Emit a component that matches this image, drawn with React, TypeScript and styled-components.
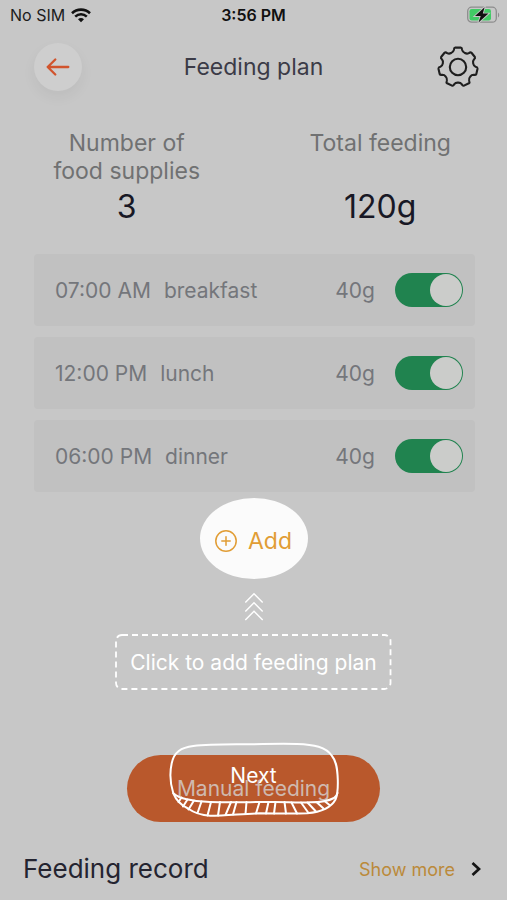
import React, { useState } from "react";
import styled, { createGlobalStyle } from "styled-components";

const GlobalStyle = createGlobalStyle`
  *, *::before, *::after { box-sizing: border-box; }
  body {
    margin: 0;
    background: #c7c7c7;
    color: #1b1b27;
    font-family: Inter, "Liberation Sans", sans-serif;
  }
  button { font-family: inherit; border: 0; padding: 0; cursor: pointer; }
`;

const Screen = styled.div`
  min-height: 100vh;
  display: flex;
  flex-direction: column;
`;

const StatusBar = styled.div`
  display: grid;
  grid-template-columns: 1fr auto 1fr;
  align-items: center;
  height: 30px;
  padding: 0 7px;
  font-size: 16px;
  color: #1c1c1c;
`;

const Carrier = styled.div`
  display: flex;
  align-items: center;
  gap: 6px;
  padding-left: 3px;
`;

const Clock = styled.time`
  font-weight: 600;
  color: #111;
`;

const BatterySlot = styled.div`
  display: flex;
  justify-content: flex-end;
`;

const Header = styled.header`
  display: grid;
  grid-template-columns: 1fr auto 1fr;
  align-items: center;
  height: 74px;
  padding: 0 28px;
`;

const BackButton = styled.button`
  display: grid;
  place-items: center;
  width: 48px;
  height: 48px;
  margin-left: 6px;
  border-radius: 50%;
  background: #cecece;
  box-shadow: 0 6px 14px rgba(0, 0, 0, 0.05);
`;

const SettingsButton = styled.button`
  display: grid;
  justify-self: end;
  background: none;
`;

const Title = styled.h1`
  margin: 0;
  font-size: 23px;
  font-weight: 400;
  color: #3b3b47;
`;

const Stats = styled.dl`
  display: grid;
  grid-template-columns: 1fr 1fr;
  margin: 0;
  padding-top: 25px;
  text-align: center;
`;

const Stat = styled.div`
  display: flex;
  flex-direction: column;
  align-items: center;
  justify-content: space-between;
`;

const StatLabel = styled.dt`
  max-width: 160px;
  font-size: 23px;
  line-height: 28px;
  color: #707172;
`;

const StatValue = styled.dd`
  margin: 0;
  font-size: 32px;
  line-height: 44px;
  color: #181825;
`;

const PlanList = styled.ul`
  display: flex;
  flex-direction: column;
  gap: 11px;
  list-style: none;
  margin: 0;
  padding: 25px 32px 6px 34px;
`;

const PlanRow = styled.li`
  display: flex;
  align-items: center;
  height: 72px;
  padding: 0 12px 0 21px;
  border-radius: 4px;
  background: #c1c1c1;
  font-size: 21px;
  color: #74767b;
`;

const Meal = styled.label`
  display: flex;
  flex: 1;
  gap: 13px;
`;

const Amount = styled.span`
  margin-right: 20px;
`;

const Toggle = styled.input`
  appearance: none;
  display: flex;
  align-items: center;
  justify-content: flex-start;
  width: 68px;
  height: 34px;
  margin: 0;
  padding: 1px;
  border-radius: 17px;
  background: #a5a5a5;
  cursor: pointer;

  &::before {
    content: "";
    width: 32px;
    height: 32px;
    border-radius: 50%;
    background: #cbccca;
  }

  &:checked {
    justify-content: flex-end;
    background: #20834f;
  }
`;

const Guide = styled.section`
  display: flex;
  flex-direction: column;
  align-items: center;
`;

const AddButton = styled.button`
  display: flex;
  align-items: center;
  justify-content: center;
  gap: 11px;
  width: 108px;
  height: 81px;
  padding-top: 4px;
  border-radius: 50%;
  background: #fbfbfb;
  font-size: 23px;
  color: #e19d35;
`;

const Chevrons = styled.svg`
  margin: 13px 0;
`;

const Hint = styled.p`
  display: grid;
  place-items: center;
  position: relative;
  height: 56px;
  margin: 0;
  padding: 0 15px;
  font-size: 21px;
  color: #fff;
`;

const DashedFrame = styled.svg`
  position: absolute;
  inset: 0;
  width: 100%;
  height: 100%;
`;

const Actions = styled.div`
  position: relative;
  display: flex;
  justify-content: center;
  padding: 65px 0 20px;
`;

const ManualButton = styled.button`
  width: 50%;
  height: 67px;
  border-radius: 34px;
  background: #b9582c;
  font-size: 21px;
  color: #cfb9af;
`;

const NextButton = styled.button`
  position: absolute;
  top: 52px;
  left: 50%;
  width: 170px;
  height: 76px;
  margin-left: -85px;
  padding-bottom: 10px;
  background: none;
  font-size: 21px;
  color: #fff;
`;

const Sketch = styled.svg`
  position: absolute;
  inset: 0;
`;

const RecordBar = styled.footer`
  display: flex;
  align-items: center;
  justify-content: space-between;
  padding: 10px 26px 14px 23px;
`;

const RecordTitle = styled.h2`
  margin: 0;
  font-size: 26px;
  line-height: 34px;
  font-weight: 400;
  color: #242430;
`;

const MoreLink = styled.a`
  display: flex;
  align-items: center;
  gap: 16px;
  font-size: 18px;
  color: #bb8a3a;
  text-decoration: none;
`;

function gearPath(teeth: number, tip: number, valley: number) {
  const point = (deg: number, r: number) => {
    const a = ((deg - 90) * Math.PI) / 180;
    return `${(21 + r * Math.cos(a)).toFixed(2)} ${(21 + r * Math.sin(a)).toFixed(2)}`;
  };
  const step = 360 / teeth;
  let d = `M${point(-8, tip)}`;
  for (let i = 0; i < teeth; i++) {
    const c = i * step;
    d += ` L${point(c + 8, tip)} Q${point(c + 12, tip)} ${point(c + 13.5, tip - 2)}`;
    d += ` C${point(c + 17, valley)} ${point(c + 21, valley)} ${point(c + step / 2, valley)}`;
    d += ` C${point(c + step - 21, valley)} ${point(c + step - 17, valley)} ${point(c + step - 13.5, tip - 2)}`;
    d += ` Q${point(c + step - 12, tip)} ${point(c + step - 8, tip)}`;
  }
  return d + "Z";
}

const WifiIcon = () => (
  <svg width="20" height="15" viewBox="0 0 20 15" fill="none" stroke="#111" strokeWidth="2.6" aria-hidden="true">
    <path d="M1 5.2C6 .4 14 .4 19 5.2" />
    <path d="M4.2 8.6c3.3-3.1 8.3-3.1 11.6 0" />
    <path d="M7 11.2c1.8-1.6 4.2-1.6 6 0L10 14.3Z" fill="#111" stroke="none" />
  </svg>
);

const BatteryIcon = () => (
  <svg width="34" height="18" viewBox="0 0 34 18" aria-hidden="true">
    <rect x="1.7" y="1.2" width="28.6" height="15" rx="4" fill="none" stroke="#8d8d8d" strokeWidth="1.3" />
    <path d="M32 6.5c1.6.8 1.6 4.2 0 5Z" fill="#8d8d8d" />
    <rect x="3.5" y="3" width="21.5" height="11.4" rx="2.2" fill="#41cb65" />
    <path d="M18.6 1.2 9 10h5.7l-2.2 6.6L22.4 7.6h-5.600Z" fill="#111" stroke="#c7c7c7" strokeWidth="1.8" paintOrder="stroke" />
  </svg>
);

const meals = [
  { id: "breakfast", time: "07:00 AM", amount: "40g" },
  { id: "lunch", time: "12:00 PM", amount: "40g" },
  { id: "dinner", time: "06:00 PM", amount: "40g" },
];

export default function App() {
  const [enabled, setEnabled] = useState<Record<string, boolean>>({
    breakfast: true,
    lunch: true,
    dinner: true,
  });

  return (
    <Screen>
      <GlobalStyle />
      <StatusBar>
        <Carrier>
          No SIM <WifiIcon />
        </Carrier>
        <Clock>3:56 PM</Clock>
        <BatterySlot>
          <BatteryIcon />
        </BatterySlot>
      </StatusBar>

      <Header>
        <BackButton aria-label="Back">
          <svg width="24" height="20" viewBox="0 0 24 20" fill="none" stroke="#d1542d" strokeWidth="2.3" strokeLinecap="round" strokeLinejoin="round">
            <path d="M22.3 10H1.7M9.3 2.5 1.7 10l7.6 7.5" />
          </svg>
        </BackButton>
        <Title>Feeding plan</Title>
        <SettingsButton aria-label="Settings">
          <svg width="42" height="42" viewBox="0 0 42 42" fill="none" stroke="#1f1f1f" strokeWidth="2.1" strokeLinejoin="round">
            <path d={gearPath(7, 19.6, 15.6)} />
            <circle cx="21" cy="21" r="8.2" />
          </svg>
        </SettingsButton>
      </Header>

      <main>
        <Stats>
          <Stat>
            <StatLabel>Number of food supplies</StatLabel>
            <StatValue>3</StatValue>
          </Stat>
          <Stat>
            <StatLabel>Total feeding</StatLabel>
            <StatValue>120g</StatValue>
          </Stat>
        </Stats>

        <PlanList>
          {meals.map(({ id, time, amount }) => (
            <PlanRow key={id}>
              <Meal htmlFor={id}>
                <span>{time}</span>
                <span>{id}</span>
              </Meal>
              <Amount>{amount}</Amount>
              <Toggle
                id={id}
                type="checkbox"
                role="switch"
                checked={enabled[id]}
                onChange={(e) => setEnabled({ ...enabled, [id]: e.target.checked })}
              />
            </PlanRow>
          ))}
        </PlanList>

        <Guide>
          <AddButton>
            <svg width="22" height="22" viewBox="0 0 22 22" fill="none" stroke="#e19d35" strokeWidth="1.5" strokeLinecap="round" aria-hidden="true">
              <circle cx="11" cy="11" r="10.2" />
              <path d="M11 6.8v8.4M6.8 11h8.4" />
            </svg>
            Add
          </AddButton>
          <Chevrons width="20" height="29" viewBox="0 0 20 29" fill="none" stroke="#fff" strokeWidth="1.4" aria-hidden="true">
            <path d="M1.3 10.5 10 1.7l8.7 8.8M1.3 19.5 10 10.7l8.7 8.8M1.3 28 10 19.2l8.7 8.8" />
          </Chevrons>
          <Hint>
            <DashedFrame aria-hidden="true">
              <rect x="1" y="1" width="99.3%" height="54" rx="6" fill="none" stroke="#fff" strokeWidth="1.8" strokeDasharray="6 4" />
            </DashedFrame>
            Click to add feeding plan
          </Hint>
        </Guide>

        <Actions>
          <ManualButton>Manual feeding</ManualButton>
          <NextButton>
            <Sketch width="170" height="76" viewBox="0 0 170 76" fill="none" stroke="#fff" strokeWidth="2" strokeLinecap="round" strokeLinejoin="round" aria-hidden="true">
              <path d="M4.3 51.3C1 41 1 29 2.7 21.3 5 10 12 5.5 24.3 4 40 2.2 57 2.4 74 2.3 92 2.300 110 1.300 128 2 145 2.500 157 5 163 14 168 20 168.500 29 168.800 38 169 46 168.500 53 166.500 57.500 162 66 152 70 138 71.300 122 72 107 71.300 91 71.300 74 71.700 57 73.700 41 73.700 31 73.200 25 70.700 19 66.500 12 63 7 58 4.300 51.300Z" />
              <path d="M4.300 51.300c4 3.500 8 5 13.400 6 8 2 15 2.700 23.300 2.700 20 .6 40 0 60 0 14-.3 27 1 40 .3 10 0 18-1 24-4.300 2-1 3-3 3.500-5" />
              <path d="M12.500 55.500 9.500 60M18.500 57.500 14 64.500M25 58.500 19.500 67.500M32.500 59.500 28.500 71M42 60l-3.500 13.500M51 60l-2 13.500M62 60l-5.500 13M67.500 60l-3.500 12.500M77.500 60l-1 12M90.500 60l-3.500 11.500M99.500 60l-2.500 11.500M106.500 60l-1.500 11.500M115.500 60l1.500 11.500M122.500 60.500l5.500 11M132 60.500l7.500 10.500M138.500 60.500l8 8.500M147.500 60l7 6.500M155.500 59l5 4" />
            </Sketch>
            Next
          </NextButton>
        </Actions>
      </main>

      <RecordBar>
        <RecordTitle>Feeding record</RecordTitle>
        <MoreLink href="#records">
          Show more
          <svg width="10" height="14" viewBox="0 0 10 14" fill="none" stroke="#151515" strokeWidth="2.7" aria-hidden="true">
            <path d="M1.500 1 8 7l-6.500 6" />
          </svg>
        </MoreLink>
      </RecordBar>
    </Screen>
  );
}
